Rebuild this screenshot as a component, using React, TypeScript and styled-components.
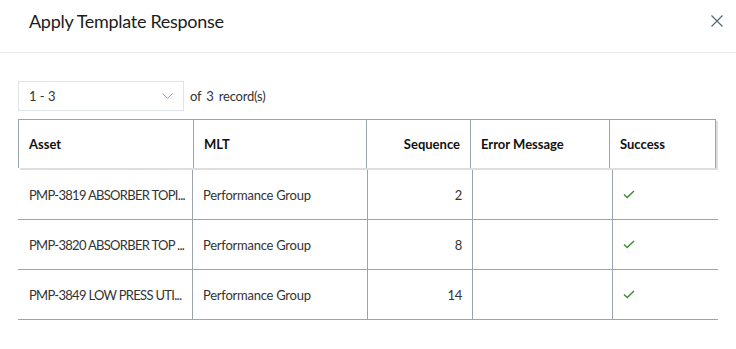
import React from 'react';
import styled, { createGlobalStyle } from 'styled-components';

const GlobalStyle = createGlobalStyle`
  html, body {
    margin: 0;
    padding: 0;
    background: #ffffff;
  }
  body {
    font-family: Lato, "Noto Sans", sans-serif;
    color: #333333;
  }
`;

const Dialog = styled.div`
  width: 736px;
  height: 349px;
  background: #fff;
  box-sizing: border-box;
`;

const Header = styled.div`
  height: 53px;
  box-sizing: border-box;
  border-bottom: 1px solid #e8ecee;
  display: flex;
  align-items: center;
  justify-content: space-between;
  padding: 0 12px 10px 29px;
`;

const Title = styled.h1`
  margin: 0;
  font-size: 18px;
  font-weight: 400;
  color: #1c1c1c;
  letter-spacing: -0.3px;
`;

const CloseButton = styled.button`
  border: none;
  background: transparent;
  padding: 0;
  width: 14px;
  height: 14px;
  display: flex;
  align-items: center;
  justify-content: center;
  cursor: pointer;
`;

const Body = styled.div`
  padding: 28px 0 0 18px;
`;

const Pager = styled.div`
  display: flex;
  align-items: center;
  gap: 6px;
  margin-bottom: 8px;
`;

const Select = styled.div`
  width: 166px;
  height: 30px;
  box-sizing: border-box;
  border: 1px solid #dfe4e7;
  display: flex;
  align-items: center;
  justify-content: space-between;
  padding: 0 10px 0 10px;
  font-size: 13px;
  color: #333;
`;

const Records = styled.span`
  font-size: 13px;
  color: #333;
  word-spacing: 2px;
  letter-spacing: -0.2px;
`;

const HeadRow = styled.div`
  display: grid;
  grid-template-columns: 175px 173px 104px 139px 106px;
  width: 698px;
  height: 49px;
  box-sizing: border-box;
  border-top: 1px solid #9aa6ae;
  border-left: 1px solid #9aa6ae;
  box-shadow: 2px 2px 0 0 #dedede;
  margin-bottom: 2px;
`;

const HeadCell = styled.div<{ $right?: boolean }>`
  border-right: 1px solid #9aa6ae;
  display: flex;
  align-items: center;
  justify-content: ${p => (p.$right ? 'flex-end' : 'flex-start')};
  padding: ${p => (p.$right ? '0 10px 0 0' : '0 0 0 10px')};
  font-size: 13px;
  font-weight: 700;
  color: #111;
  box-sizing: border-box;
`;

const Row = styled.div`
  display: grid;
  grid-template-columns: 175px 175px 105px 140px 105px;
  width: 700px;
  height: 50px;
  box-sizing: border-box;
  border-bottom: 1px solid #9aa6ae;
`;

const Cell = styled.div<{ $right?: boolean; $last?: boolean; $first?: boolean }>`
  border-right: ${p => (p.$last ? 'none' : '1px solid #9aa6ae')};
  display: flex;
  align-items: center;
  justify-content: ${p => (p.$right ? 'flex-end' : 'flex-start')};
  padding: ${p => (p.$right ? '0 10px 0 0' : p.$first ? '0 6px 0 11px' : '0 10px 0 10px')};
  font-size: 13px;
  letter-spacing: ${p => (p.$first ? '-0.7px' : '-0.25px')};
  color: #333;
  box-sizing: border-box;
  min-width: 0;
  overflow: hidden;
  white-space: nowrap;
`;

const rows = [
  { asset: 'PMP-3819 ABSORBER TOPI...', mlt: 'Performance Group', seq: 2 },
  { asset: 'PMP-3820 ABSORBER TOP ...', mlt: 'Performance Group', seq: 8 },
  { asset: 'PMP-3849 LOW PRESS UTI...', mlt: 'Performance Group', seq: 14 },
];

const Check = () => (
  <svg width="12" height="9" viewBox="0 0 12 9">
    <path d="M1 4.5 L4.2 7.6 L11 1" fill="none" stroke="#3d8b2f" strokeWidth="1.4" />
  </svg>
);

export default function App() {
  return (
    <Dialog>
      <GlobalStyle />
      <Header>
        <Title>Apply Template Response</Title>
        <CloseButton aria-label="close">
          <svg width="12" height="12" viewBox="0 0 12 12">
            <path d="M0.5 0.5 L11.5 11.5 M11.5 0.5 L0.5 11.5" stroke="#4f6472" strokeWidth="1.1" />
          </svg>
        </CloseButton>
      </Header>
      <Body>
        <Pager>
          <Select>
            <span>1 - 3</span>
            <svg width="11" height="6" viewBox="0 0 11 6">
              <path d="M0.5 0.5 L5.5 5.3 L10.5 0.5" fill="none" stroke="#8fa0d8" strokeWidth="1" />
            </svg>
          </Select>
          <Records>of 3 record(s)</Records>
        </Pager>
        <HeadRow>
          <HeadCell>Asset</HeadCell>
          <HeadCell>MLT</HeadCell>
          <HeadCell $right>Sequence</HeadCell>
          <HeadCell>Error Message</HeadCell>
          <HeadCell>Success</HeadCell>
        </HeadRow>
        {rows.map(r => (
          <Row key={r.asset}>
            <Cell $first>{r.asset}</Cell>
            <Cell>{r.mlt}</Cell>
            <Cell $right>{r.seq}</Cell>
            <Cell />
            <Cell $last>
              <Check />
            </Cell>
          </Row>
        ))}
      </Body>
    </Dialog>
  );
}
